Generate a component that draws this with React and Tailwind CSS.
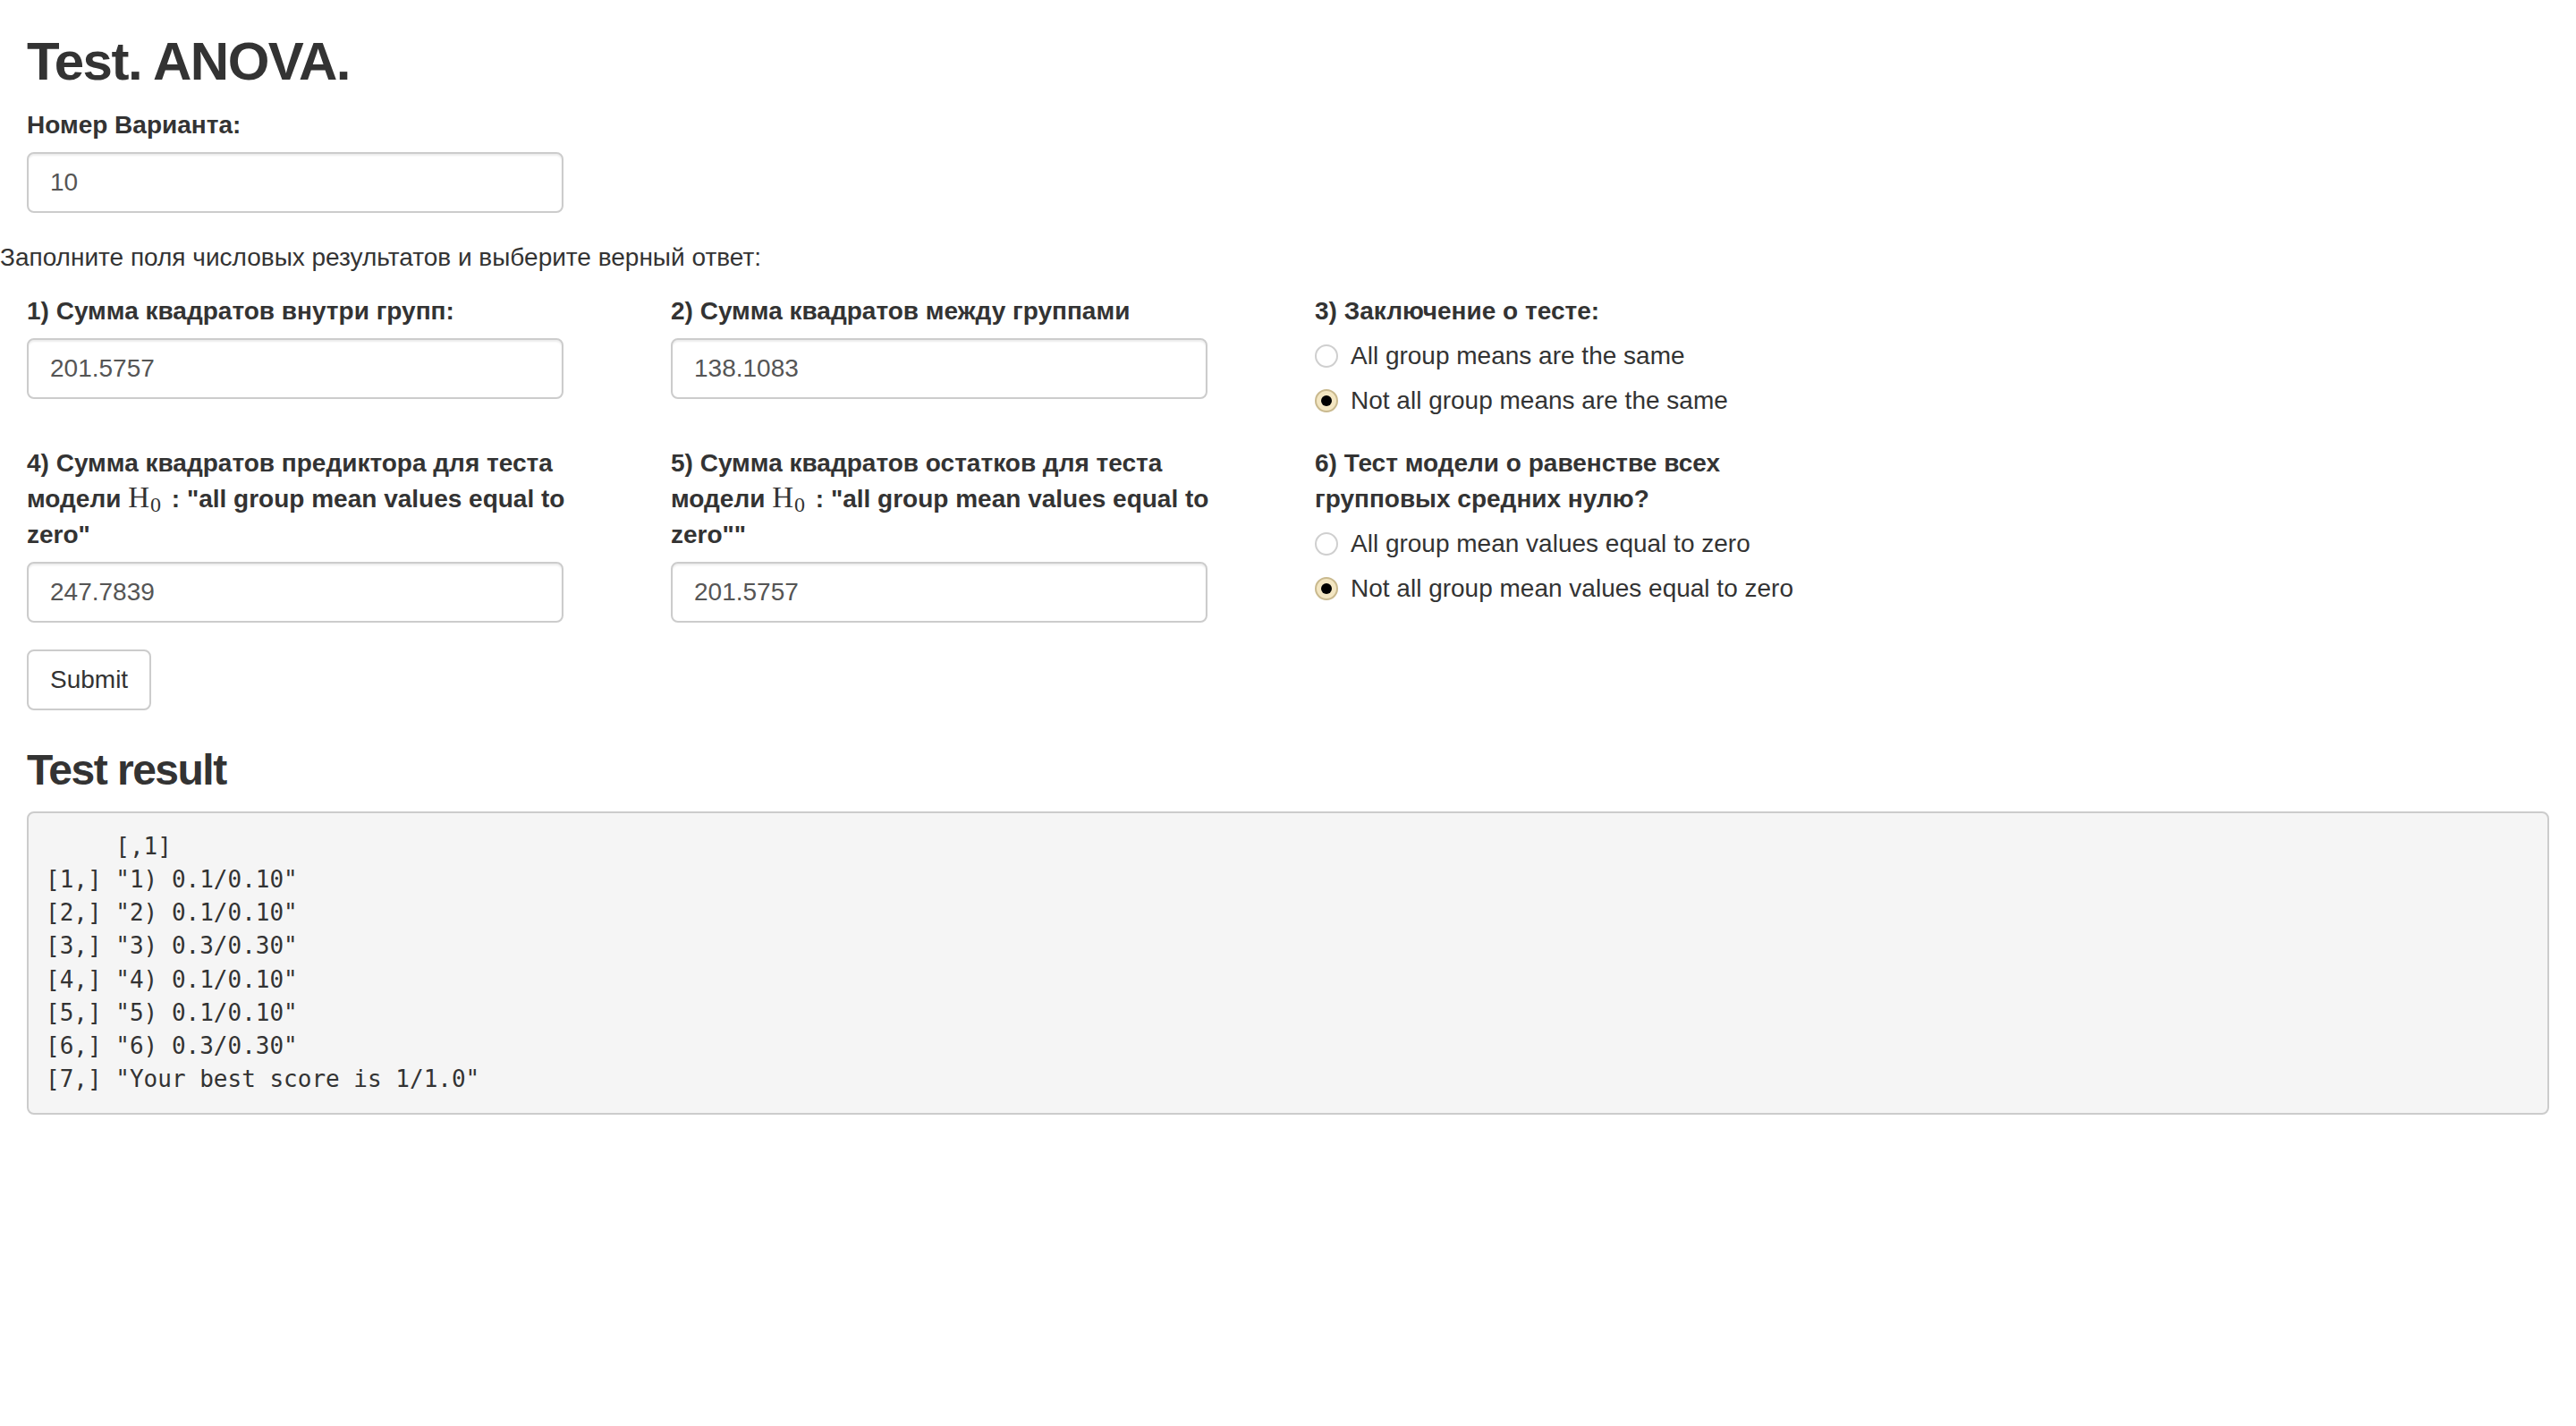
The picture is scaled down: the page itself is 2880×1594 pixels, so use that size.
/**
 * App.jsx — "Test. ANOVA." answer sheet (Shiny/Bootstrap look, drawn at 2x)
 */

const FONT = "font-['Liberation_Sans',Arial,Helvetica,sans-serif]";

function H0() {
  return (
    <span className="font-normal font-['Liberation_Serif','Times_New_Roman',serif] text-[33px] leading-[0]">
      H<sub className="text-[24px] relative top-[5px] align-baseline ml-[1px] mr-[4px]">0</sub>
    </span>
  );
}

function TextField({ label, value }) {
  return (
    <div className="w-[600px] max-w-full mb-[30px]">
      <label className="block font-bold mb-[10px]">{label}</label>
      <input
        readOnly
        value={value}
        className="block w-full h-[68px] px-[24px] py-[12px] text-[28px] text-[#555] bg-white border-2 border-[#ccc] rounded-[8px] shadow-[inset_0_2px_2px_rgba(0,0,0,0.075)] outline-none"
      />
    </div>
  );
}

function Radio({ checked, children }) {
  return (
    <div className="h-[40px] flex items-center gap-[14px]">
      {checked ? (
        <span className="w-[26px] h-[26px] rounded-full border-2 border-[#c9b98e] bg-[#f3e6c2] flex items-center justify-center shrink-0">
          <span className="w-[12px] h-[12px] rounded-full bg-black" />
        </span>
      ) : (
        <span className="w-[26px] h-[26px] rounded-full border-2 border-[#cfcfcf] bg-white shrink-0" />
      )}
      <span>{children}</span>
    </div>
  );
}

function RadioGroup({ label, options, selected }) {
  return (
    <div className="w-[600px] max-w-full mb-[30px]">
      <div className="font-bold">{label}</div>
      <div className="mt-[10px] flex flex-col gap-[10px]">
        {options.map((o, i) => (
          <Radio key={o} checked={i === selected}>{o}</Radio>
        ))}
      </div>
    </div>
  );
}

const results = [
  '     [,1]',
  '[1,] "1) 0.1/0.10"',
  '[2,] "2) 0.1/0.10"',
  '[3,] "3) 0.3/0.30"',
  '[4,] "4) 0.1/0.10"',
  '[5,] "5) 0.1/0.10"',
  '[6,] "6) 0.3/0.30"',
  '[7,] "Your best score is 1/1.0"',
];

export default function App() {
  return (
    <div className={`min-h-screen bg-white text-[#333] text-[28px] leading-[40px] ${FONT}`}>
      <div className="px-[30px]">
        <h2 className="mt-[36px] mb-[18px] text-[60px] leading-[66px] font-bold tracking-[-1.5px]">Test. ANOVA.</h2>
        <TextField label="Номер Варианта:" value="10" />
      </div>

      <p className="mb-[20px]">Заполните поля числовых результатов и выберите верный ответ:</p>

      <div className="px-[30px]">
        {/* Row 1 */}
        <div className="grid grid-cols-4 -mx-[30px]">
          <div className="px-[30px]">
            <TextField label="1) Сумма квадратов внутри групп:" value="201.5757" />
          </div>
          <div className="px-[30px]">
            <TextField label="2) Сумма квадратов между группами" value="138.1083" />
          </div>
          <div className="px-[30px]">
            <RadioGroup
              label="3) Заключение о тесте:"
              options={['All group means are the same', 'Not all group means are the same']}
              selected={1}
            />
          </div>
          <div />
        </div>

        {/* Row 2 */}
        <div className="grid grid-cols-4 -mx-[30px]">
          <div className="px-[30px]">
            <TextField
              value="247.7839"
              label={
                <>
                  4) Сумма квадратов предиктора для теста
                  <br />
                  <span className="whitespace-nowrap">модели <H0 /> : "all group mean values equal to</span>
                  <br />
                  zero"
                </>
              }
            />
          </div>
          <div className="px-[30px]">
            <TextField
              value="201.5757"
              label={
                <>
                  5) Сумма квадратов остатков для теста
                  <br />
                  <span className="whitespace-nowrap">модели <H0 /> : "all group mean values equal to</span>
                  <br />
                  zero""
                </>
              }
            />
          </div>
          <div className="px-[30px]">
            <RadioGroup
              label={
                <>
                  6) Тест модели о равенстве всех
                  <br />
                  групповых средних нулю?
                </>
              }
              options={['All group mean values equal to zero', 'Not all group mean values equal to zero']}
              selected={1}
            />
          </div>
          <div />
        </div>

        <button className="h-[68px] px-[24px] bg-white border-2 border-[#ccc] rounded-[8px] text-[28px] text-[#333]">
          Submit
        </button>

        <h3 className="mt-[40px] mb-[20px] text-[48px] leading-[53px] font-bold tracking-[-1.5px]">Test result</h3>

        <pre className="mb-[20px] p-[19px] bg-[#f5f5f5] border-2 border-[#ccc] rounded-[8px] text-[26px] leading-[37.14px] text-[#333] font-['DejaVu_Sans_Mono',Menlo,monospace] whitespace-pre">
          {results.join('\n')}
        </pre>
      </div>
    </div>
  );
}
